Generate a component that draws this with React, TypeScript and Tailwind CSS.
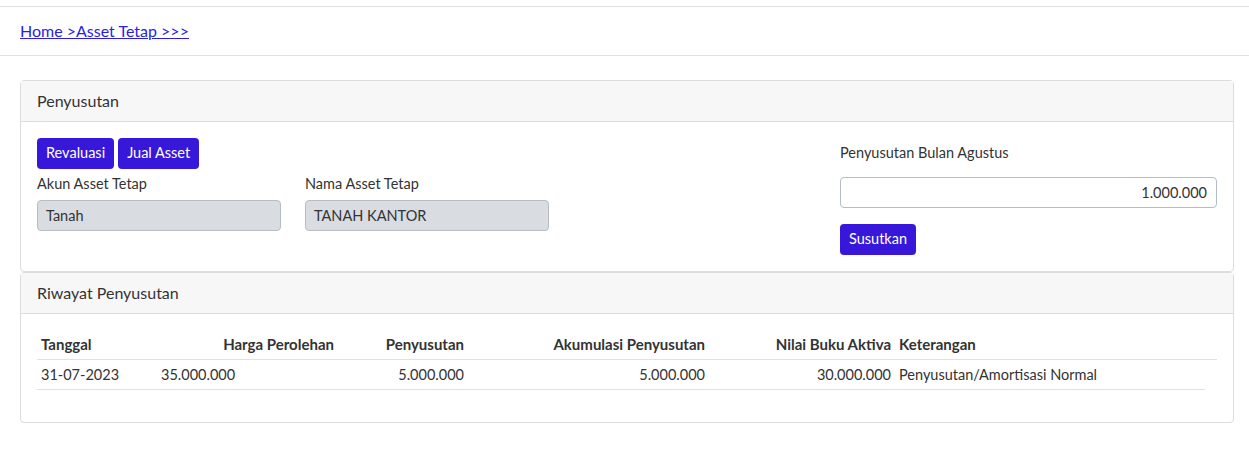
import React from 'react'

const FONT = { fontFamily: 'Lato, "Noto Sans", sans-serif' }

const rows = [
  {
    tanggal: '31-07-2023',
    harga: '35.000.000',
    susut: '5.000.000',
    akum: '5.000.000',
    nilai: '30.000.000',
    ket: 'Penyusutan/Amortisasi Normal',
  },
]

function Btn({ children }: { children: React.ReactNode }) {
  return (
    <button className="h-[31px] px-[9px] rounded-[4px] bg-[#3718db] text-white text-[14.5px] leading-none">
      {children}
    </button>
  )
}

function ReadInput({ value }: { value: string }) {
  return (
    <div className="h-[31px] flex items-center px-[8px] rounded-[4px] bg-[#d9dce1] border border-[#b6bcc3] text-[14.5px] text-[#333]">
      {value}
    </div>
  )
}

export default function App() {
  return (
    <div className="min-h-[466px] bg-white text-[#333]" style={FONT}>
      <div className="h-[6px]" />
      <div className="h-[50px] border-t border-b border-[#dee2e6] flex items-center px-[20px]">
        <a href="#" className="text-[16px] text-[#2a1de4] underline">Home &gt;Asset Tetap &gt;&gt;&gt;</a>
      </div>

      <div className="ml-[20px] mr-[15px] mt-[24px]">
        {/* card penyusutan */}
        <div className="border border-[#dcdcdc] rounded-[4px]">
          <div className="h-[41px] bg-[#f7f7f7] border-b border-[#dcdcdc] flex items-center px-[16px] text-[16px]">
            Penyusutan
          </div>
          <div className="p-[16px] grid grid-cols-[803px_1fr]">
            <div>
              <div className="flex gap-[4px]">
                <Btn>Revaluasi</Btn>
                <Btn>Jual Asset</Btn>
              </div>
              <div className="grid grid-cols-[244px_244px] gap-x-[24px] mt-[3px]">
                <div>
                  <div className="h-[24px] leading-[24px] text-[14.5px] mb-[4px]">Akun Asset Tetap</div>
                  <ReadInput value="Tanah" />
                </div>
                <div>
                  <div className="h-[24px] leading-[24px] text-[14.5px] mb-[4px]">Nama Asset Tetap</div>
                  <ReadInput value="TANAH KANTOR" />
                </div>
              </div>
            </div>
            <div className="pt-[3px]">
              <div className="h-[24px] leading-[24px] text-[14.5px] mb-[12px]">Penyusutan Bulan Agustus</div>
              <div className="h-[31px] flex items-center justify-end px-[9px] rounded-[4px] border border-[#b6bcc3] text-[14.5px] text-[#333]">
                1.000.000
              </div>
              <div className="mt-[16px]">
                <Btn>Susutkan</Btn>
              </div>
            </div>
          </div>
        </div>

        {/* card riwayat */}
        <div className="border border-[#dcdcdc] rounded-[4px]">
          <div className="h-[41px] bg-[#f7f7f7] border-b border-[#dcdcdc] flex items-center px-[16px] text-[16px]">
            Riwayat Penyusutan
          </div>
          <div className="p-[16px] pb-[32px] text-[14.5px]">
            <div className="grid grid-cols-[120px_181px_130px_241px_186px_1fr] h-[30px] items-center border-b border-[#dee2e6] font-bold text-[15px]">
              <div className="px-[4px]">Tanggal</div>
              <div className="px-[4px] text-right">Harga Perolehan</div>
              <div className="px-[4px] text-right">Penyusutan</div>
              <div className="px-[4px] text-right">Akumulasi Penyusutan</div>
              <div className="px-[4px] text-right">Nilai Buku Aktiva</div>
              <div className="px-[4px]">Keterangan</div>
            </div>
            {rows.map(r => (
              <div
                key={r.tanggal}
                className="grid grid-cols-[120px_181px_130px_241px_186px_1fr] h-[30px] items-center border-b border-[#dee2e6] mr-[12px]"
              >
                <div className="px-[4px]">{r.tanggal}</div>
                <div className="px-[4px]">{r.harga}</div>
                <div className="px-[4px] text-right">{r.susut}</div>
                <div className="px-[4px] text-right">{r.akum}</div>
                <div className="px-[4px] text-right">{r.nilai}</div>
                <div className="px-[4px]">{r.ket}</div>
              </div>
            ))}
          </div>
        </div>
      </div>
    </div>
  )
}
